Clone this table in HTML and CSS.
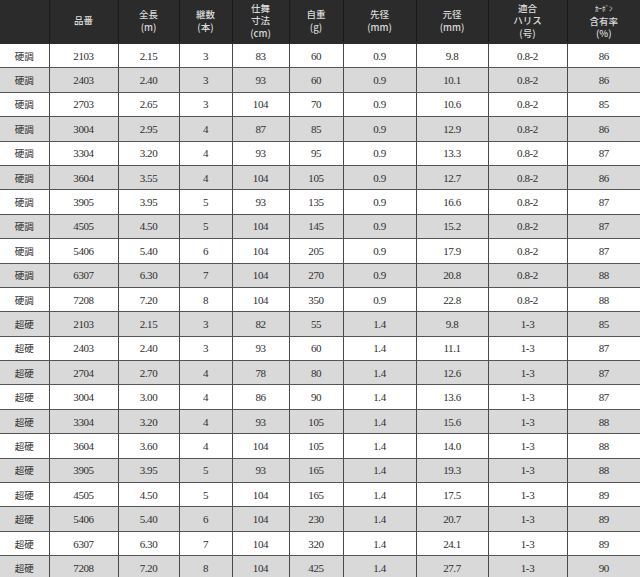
FILE: index.html
```html
<!DOCTYPE html>
<html lang="ja">
<head>
<meta charset="utf-8">
<title>スペック表</title>
<link rel="stylesheet" href="styles.css">
</head>
<body>
<table class="spec">
<colgroup>
<col class="c0"><col class="c1"><col class="c2"><col class="c3"><col class="c4"><col class="c5"><col class="c6"><col class="c7"><col class="c8"><col class="c9">
</colgroup>
<thead>
<tr>
<th></th>
<th>品番</th>
<th>全長<br>(m)</th>
<th>継数<br>(本)</th>
<th>仕舞<br>寸法<br>(cm)</th>
<th>自重<br>(g)</th>
<th>先径<br>(mm)</th>
<th>元径<br>(mm)</th>
<th>適合<br>ハリス<br>(号)</th>
<th><span class="small">ｶｰﾎﾞﾝ</span><br>含有率<br>(%)</th>
</tr>
</thead>
<tbody>
<tr><td class="jp">硬調</td><td>2103</td><td>2.15</td><td>3</td><td>83</td><td>60</td><td>0.9</td><td>9.8</td><td>0.8-2</td><td>86</td></tr>
<tr><td class="jp">硬調</td><td>2403</td><td>2.40</td><td>3</td><td>93</td><td>60</td><td>0.9</td><td>10.1</td><td>0.8-2</td><td>86</td></tr>
<tr><td class="jp">硬調</td><td>2703</td><td>2.65</td><td>3</td><td>104</td><td>70</td><td>0.9</td><td>10.6</td><td>0.8-2</td><td>85</td></tr>
<tr><td class="jp">硬調</td><td>3004</td><td>2.95</td><td>4</td><td>87</td><td>85</td><td>0.9</td><td>12.9</td><td>0.8-2</td><td>86</td></tr>
<tr><td class="jp">硬調</td><td>3304</td><td>3.20</td><td>4</td><td>93</td><td>95</td><td>0.9</td><td>13.3</td><td>0.8-2</td><td>87</td></tr>
<tr><td class="jp">硬調</td><td>3604</td><td>3.55</td><td>4</td><td>104</td><td>105</td><td>0.9</td><td>12.7</td><td>0.8-2</td><td>86</td></tr>
<tr><td class="jp">硬調</td><td>3905</td><td>3.95</td><td>5</td><td>93</td><td>135</td><td>0.9</td><td>16.6</td><td>0.8-2</td><td>87</td></tr>
<tr><td class="jp">硬調</td><td>4505</td><td>4.50</td><td>5</td><td>104</td><td>145</td><td>0.9</td><td>15.2</td><td>0.8-2</td><td>87</td></tr>
<tr><td class="jp">硬調</td><td>5406</td><td>5.40</td><td>6</td><td>104</td><td>205</td><td>0.9</td><td>17.9</td><td>0.8-2</td><td>87</td></tr>
<tr><td class="jp">硬調</td><td>6307</td><td>6.30</td><td>7</td><td>104</td><td>270</td><td>0.9</td><td>20.8</td><td>0.8-2</td><td>88</td></tr>
<tr><td class="jp">硬調</td><td>7208</td><td>7.20</td><td>8</td><td>104</td><td>350</td><td>0.9</td><td>22.8</td><td>0.8-2</td><td>88</td></tr>
<tr><td class="jp">超硬</td><td>2103</td><td>2.15</td><td>3</td><td>82</td><td>55</td><td>1.4</td><td>9.8</td><td>1-3</td><td>85</td></tr>
<tr><td class="jp">超硬</td><td>2403</td><td>2.40</td><td>3</td><td>93</td><td>60</td><td>1.4</td><td>11.1</td><td>1-3</td><td>87</td></tr>
<tr><td class="jp">超硬</td><td>2704</td><td>2.70</td><td>4</td><td>78</td><td>80</td><td>1.4</td><td>12.6</td><td>1-3</td><td>87</td></tr>
<tr><td class="jp">超硬</td><td>3004</td><td>3.00</td><td>4</td><td>86</td><td>90</td><td>1.4</td><td>13.6</td><td>1-3</td><td>87</td></tr>
<tr><td class="jp">超硬</td><td>3304</td><td>3.20</td><td>4</td><td>93</td><td>105</td><td>1.4</td><td>15.6</td><td>1-3</td><td>88</td></tr>
<tr><td class="jp">超硬</td><td>3604</td><td>3.60</td><td>4</td><td>104</td><td>105</td><td>1.4</td><td>14.0</td><td>1-3</td><td>88</td></tr>
<tr><td class="jp">超硬</td><td>3905</td><td>3.95</td><td>5</td><td>93</td><td>165</td><td>1.4</td><td>19.3</td><td>1-3</td><td>88</td></tr>
<tr><td class="jp">超硬</td><td>4505</td><td>4.50</td><td>5</td><td>104</td><td>165</td><td>1.4</td><td>17.5</td><td>1-3</td><td>89</td></tr>
<tr><td class="jp">超硬</td><td>5406</td><td>5.40</td><td>6</td><td>104</td><td>230</td><td>1.4</td><td>20.7</td><td>1-3</td><td>89</td></tr>
<tr><td class="jp">超硬</td><td>6307</td><td>6.30</td><td>7</td><td>104</td><td>320</td><td>1.4</td><td>24.1</td><td>1-3</td><td>89</td></tr>
<tr><td class="jp">超硬</td><td>7208</td><td>7.20</td><td>8</td><td>104</td><td>425</td><td>1.4</td><td>27.7</td><td>1-3</td><td>90</td></tr>
</tbody>
</table>
</body>
</html>
```
FILE: styles.css
```css
html, body {
  margin: 0;
  padding: 0;
  background: #ffffff;
}

.spec {
  width: 640px;
  border-collapse: collapse;
  table-layout: fixed;
  color: #2e2e2e;
}

.c0 { width: 49px; }
.c1 { width: 69px; }
.c2 { width: 61px; }
.c3 { width: 53px; }
.c4 { width: 57px; }
.c5 { width: 54px; }
.c6 { width: 73px; }
.c7 { width: 72px; }
.c8 { width: 79px; }
.c9 { width: 73px; }

.spec thead th {
  height: 41px;
  padding: 0 0 2px 0;
  background: #2b2b2b;
  color: #d9d9d9;
  font-family: "Noto Sans CJK JP", "Liberation Serif", sans-serif;
  font-weight: 500;
  font-size: 9.5px;
  line-height: 12.5px;
  text-align: center;
  vertical-align: middle;
  border-left: 1px solid #1a1a1a;
  border-bottom: 1px solid #2b2b2b;
}

.spec thead th:first-child {
  border-left: none;
}

.spec .small {
  font-size: 7px;
}

.spec tbody td {
  height: 24.4px;
  padding: 0;
  text-align: center;
  vertical-align: middle;
  font-family: "Liberation Serif", serif;
  font-size: 11px;
  letter-spacing: -0.4px;
  line-height: 12px;
  border-left: 1px solid #4a4a4a;
  border-bottom: 1px solid #555555;
  box-sizing: border-box;
}

.spec tbody td.jp {
  border-left: none;
  font-family: "Noto Sans CJK JP", sans-serif;
  font-size: 9.5px;
  letter-spacing: 0;
}

.spec tbody tr:nth-child(even) td {
  background: #d9d9d9;
}
```
